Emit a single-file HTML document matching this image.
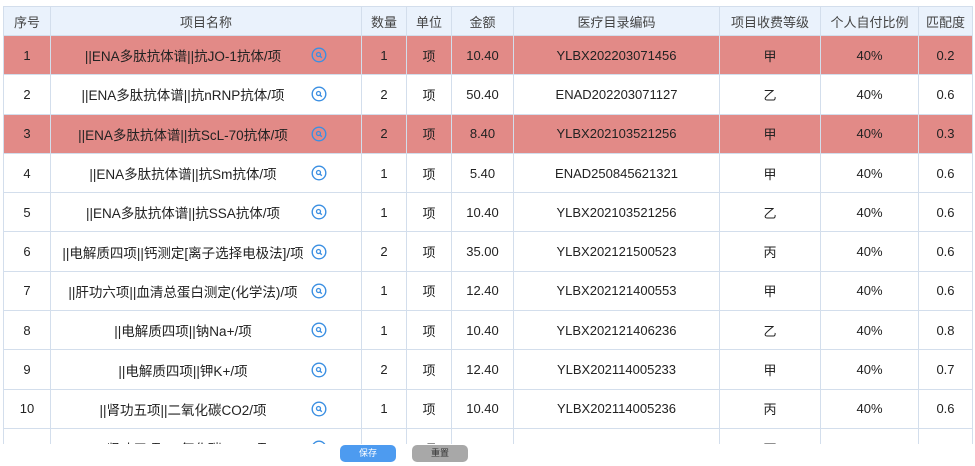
<!DOCTYPE html>
<html><head><meta charset="utf-8"><style>
body{margin:0;width:975px;height:466px;background:#fff;overflow:hidden;font-family:"Liberation Sans","Noto Sans CJK SC",sans-serif;color:#222;position:relative}
.wrap{position:absolute;left:3px;top:6px;width:971px;height:438px;overflow:hidden}
table{border-collapse:collapse;table-layout:fixed;width:969px;font-size:13px}
td,th{border:1px solid #d3deec;text-align:center;padding:0;font-weight:normal;white-space:nowrap}
th{height:28px;background:#eaf2fc;color:#444}
td{height:38.3px}
tr.r td{background:#e28a87}
td.n{position:relative;text-align:left;font-size:13.5px}
td.n span{position:absolute;left:0;width:264px;text-align:center;top:50%;transform:translateY(-50%)}
td.n svg{position:absolute;left:260px;top:50%;margin-top:-8px}
.btn{position:absolute;top:445px;height:17px;width:56px;border-radius:5px;color:#fff;font-size:9px;text-align:center;line-height:17px}
</style></head><body>
<div class="wrap"><table>
<colgroup><col style="width:47px"><col style="width:311px"><col style="width:45px"><col style="width:45px"><col style="width:62px"><col style="width:206px"><col style="width:101px"><col style="width:98px"><col style="width:54px"></colgroup>
<tr><th>序号</th><th>项目名称</th><th>数量</th><th>单位</th><th>金额</th><th>医疗目录编码</th><th>项目收费等级</th><th>个人自付比例</th><th>匹配度</th></tr>
<tr class="r"><td>1</td><td class="n"><span>||ENA多肽抗体谱||抗JO-1抗体/项</span><svg width="16" height="16" viewBox="0 0 16 16"><circle cx="8" cy="8" r="6.8" fill="none" stroke="#3b8fe2" stroke-width="1.4"/><circle cx="7.5" cy="7.5" r="2" fill="none" stroke="#3b8fe2" stroke-width="1.3"/><path d="M9 9l1.8 1.8" stroke="#3b8fe2" stroke-width="1.4"/></svg></td><td>1</td><td>项</td><td>10.40</td><td>YLBX202203071456</td><td>甲</td><td>40%</td><td>0.2</td></tr>
<tr><td>2</td><td class="n"><span>||ENA多肽抗体谱||抗nRNP抗体/项</span><svg width="16" height="16" viewBox="0 0 16 16"><circle cx="8" cy="8" r="6.8" fill="none" stroke="#3b8fe2" stroke-width="1.4"/><circle cx="7.5" cy="7.5" r="2" fill="none" stroke="#3b8fe2" stroke-width="1.3"/><path d="M9 9l1.8 1.8" stroke="#3b8fe2" stroke-width="1.4"/></svg></td><td>2</td><td>项</td><td>50.40</td><td>ENAD202203071127</td><td>乙</td><td>40%</td><td>0.6</td></tr>
<tr class="r"><td>3</td><td class="n"><span>||ENA多肽抗体谱||抗ScL-70抗体/项</span><svg width="16" height="16" viewBox="0 0 16 16"><circle cx="8" cy="8" r="6.8" fill="none" stroke="#3b8fe2" stroke-width="1.4"/><circle cx="7.5" cy="7.5" r="2" fill="none" stroke="#3b8fe2" stroke-width="1.3"/><path d="M9 9l1.8 1.8" stroke="#3b8fe2" stroke-width="1.4"/></svg></td><td>2</td><td>项</td><td>8.40</td><td>YLBX202103521256</td><td>甲</td><td>40%</td><td>0.3</td></tr>
<tr><td>4</td><td class="n"><span>||ENA多肽抗体谱||抗Sm抗体/项</span><svg width="16" height="16" viewBox="0 0 16 16"><circle cx="8" cy="8" r="6.8" fill="none" stroke="#3b8fe2" stroke-width="1.4"/><circle cx="7.5" cy="7.5" r="2" fill="none" stroke="#3b8fe2" stroke-width="1.3"/><path d="M9 9l1.8 1.8" stroke="#3b8fe2" stroke-width="1.4"/></svg></td><td>1</td><td>项</td><td>5.40</td><td>ENAD250845621321</td><td>甲</td><td>40%</td><td>0.6</td></tr>
<tr><td>5</td><td class="n"><span>||ENA多肽抗体谱||抗SSA抗体/项</span><svg width="16" height="16" viewBox="0 0 16 16"><circle cx="8" cy="8" r="6.8" fill="none" stroke="#3b8fe2" stroke-width="1.4"/><circle cx="7.5" cy="7.5" r="2" fill="none" stroke="#3b8fe2" stroke-width="1.3"/><path d="M9 9l1.8 1.8" stroke="#3b8fe2" stroke-width="1.4"/></svg></td><td>1</td><td>项</td><td>10.40</td><td>YLBX202103521256</td><td>乙</td><td>40%</td><td>0.6</td></tr>
<tr><td>6</td><td class="n"><span>||电解质四项||钙测定[离子选择电极法]/项</span><svg width="16" height="16" viewBox="0 0 16 16"><circle cx="8" cy="8" r="6.8" fill="none" stroke="#3b8fe2" stroke-width="1.4"/><circle cx="7.5" cy="7.5" r="2" fill="none" stroke="#3b8fe2" stroke-width="1.3"/><path d="M9 9l1.8 1.8" stroke="#3b8fe2" stroke-width="1.4"/></svg></td><td>2</td><td>项</td><td>35.00</td><td>YLBX202121500523</td><td>丙</td><td>40%</td><td>0.6</td></tr>
<tr><td>7</td><td class="n"><span>||肝功六项||血清总蛋白测定(化学法)/项</span><svg width="16" height="16" viewBox="0 0 16 16"><circle cx="8" cy="8" r="6.8" fill="none" stroke="#3b8fe2" stroke-width="1.4"/><circle cx="7.5" cy="7.5" r="2" fill="none" stroke="#3b8fe2" stroke-width="1.3"/><path d="M9 9l1.8 1.8" stroke="#3b8fe2" stroke-width="1.4"/></svg></td><td>1</td><td>项</td><td>12.40</td><td>YLBX202121400553</td><td>甲</td><td>40%</td><td>0.6</td></tr>
<tr><td>8</td><td class="n"><span>||电解质四项||钠Na+/项</span><svg width="16" height="16" viewBox="0 0 16 16"><circle cx="8" cy="8" r="6.8" fill="none" stroke="#3b8fe2" stroke-width="1.4"/><circle cx="7.5" cy="7.5" r="2" fill="none" stroke="#3b8fe2" stroke-width="1.3"/><path d="M9 9l1.8 1.8" stroke="#3b8fe2" stroke-width="1.4"/></svg></td><td>1</td><td>项</td><td>10.40</td><td>YLBX202121406236</td><td>乙</td><td>40%</td><td>0.8</td></tr>
<tr><td>9</td><td class="n"><span>||电解质四项||钾K+/项</span><svg width="16" height="16" viewBox="0 0 16 16"><circle cx="8" cy="8" r="6.8" fill="none" stroke="#3b8fe2" stroke-width="1.4"/><circle cx="7.5" cy="7.5" r="2" fill="none" stroke="#3b8fe2" stroke-width="1.3"/><path d="M9 9l1.8 1.8" stroke="#3b8fe2" stroke-width="1.4"/></svg></td><td>2</td><td>项</td><td>12.40</td><td>YLBX202114005233</td><td>甲</td><td>40%</td><td>0.7</td></tr>
<tr><td>10</td><td class="n"><span>||肾功五项||二氧化碳CO2/项</span><svg width="16" height="16" viewBox="0 0 16 16"><circle cx="8" cy="8" r="6.8" fill="none" stroke="#3b8fe2" stroke-width="1.4"/><circle cx="7.5" cy="7.5" r="2" fill="none" stroke="#3b8fe2" stroke-width="1.3"/><path d="M9 9l1.8 1.8" stroke="#3b8fe2" stroke-width="1.4"/></svg></td><td>1</td><td>项</td><td>10.40</td><td>YLBX202114005236</td><td>丙</td><td>40%</td><td>0.6</td></tr>
<tr><td>11</td><td class="n"><span>||肾功五项||二氧化碳CO2/项</span><svg width="16" height="16" viewBox="0 0 16 16"><circle cx="8" cy="8" r="6.8" fill="none" stroke="#3b8fe2" stroke-width="1.4"/><circle cx="7.5" cy="7.5" r="2" fill="none" stroke="#3b8fe2" stroke-width="1.3"/><path d="M9 9l1.8 1.8" stroke="#3b8fe2" stroke-width="1.4"/></svg></td><td>1</td><td>项</td><td>10.40</td><td>YLBX202114005236</td><td>丙</td><td>40%</td><td>0.6</td></tr>
</table></div>
<div class="btn" style="left:340px;background:#4d9bf0">保存</div>
<div class="btn" style="left:412px;background:#a8a8a8;color:#333">重置</div>
</body></html>
